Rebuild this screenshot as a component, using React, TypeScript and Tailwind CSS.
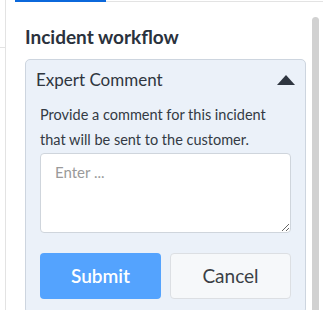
export default function App() {
  return (
    <div className="w-[323px] h-[310px] overflow-hidden bg-white flex font-['Lato',sans-serif]">
      <div className="w-[6px] shrink-0 border-r border-[#e3e3e3]">
        <div className="h-[48px] border-b border-[#e3e3e3]" />
      </div>
      <div className="flex-1 flex flex-col">
        <div className="flex h-[3px]">
          <div className="ml-[9px] w-[91px] bg-[#0b68db]" />
          <div className="flex-1 mt-[1px] border-t border-[#e3e3e3]" />
        </div>
        <div className="flex flex-1">
          <div className="flex-1 pl-[19px] pr-[6px] pt-[24px]">
            <h1 className="text-[19px] leading-[22px] font-bold text-[#2a323d]">Incident workflow</h1>
            <div className="mt-[11px] bg-[#ebf1f9] border border-[#cdd5df] rounded-[5px]">
              <div className="h-[39px] pl-[10px] pr-[10px] flex items-center justify-between">
                <span className="text-[17px] text-[#2f3640]">Expert Comment</span>
                <svg width="18" height="10" viewBox="0 0 18 10">
                  <polygon points="0,10 9,0 18,10" fill="#2f3640" />
                </svg>
              </div>
              <div className="px-[14px] pt-[3px] pb-[14px]">
                <p className="text-[14.5px] leading-[25px] text-[#333a44] max-w-[230px]">
                  Provide a comment for this incident that will be sent to the customer.
                </p>
                <textarea
                  placeholder="Enter ..."
                  className="mt-[1px] block w-full h-[80px] bg-white border border-[#cfd5dc] rounded-[4px] px-[14px] py-[7px] text-[15px] placeholder:text-[#9a9a9a] outline-none"
                />
                <div className="mt-[20px] grid grid-cols-2 gap-[9px]">
                  <button className="h-[46px] rounded-[4px] bg-[#54a3fe] text-white text-[19px] font-semibold">
                    Submit
                  </button>
                  <button className="h-[46px] rounded-[4px] bg-[#f6f8fa] border border-[#dcdfe3] text-[#3a3f45] text-[19px]">
                    Cancel
                  </button>
                </div>
              </div>
            </div>
          </div>
          <div className="w-[7px] mt-[15px] mr-[4px] bg-[#d1d1d1] rounded-t-full" />
        </div>
      </div>
    </div>
  );
}
